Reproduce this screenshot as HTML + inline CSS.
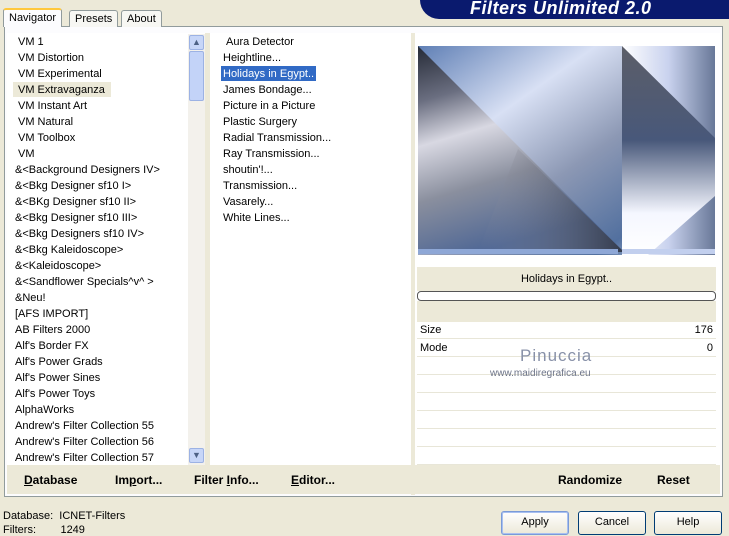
<!DOCTYPE html><html><head><style>
*{margin:0;padding:0;box-sizing:border-box}
body{width:729px;height:528px;background:#ece9d8;font-family:"Liberation Sans",sans-serif;font-size:11px;color:#000;position:relative;overflow:hidden}
.a{position:absolute}
.it{position:absolute;white-space:nowrap;line-height:14px}
.tab{position:absolute;border:1px solid #919b9c;border-bottom:none;background:#f7f7f3;padding:0 5px;font-size:11px;line-height:16px;border-radius:3px 3px 0 0}
.btn{position:absolute;border:1px solid #003c74;border-radius:3px;background:linear-gradient(#fff,#ece9d8);text-align:center;line-height:20px;font-size:11px}
.row{position:absolute;left:417px;width:299px;height:17px;background:#fff;border-bottom:1px solid #e8e6d8}
.bb{position:absolute;font-weight:bold;font-size:12px;top:473px}
</style></head><body>
<div class="a" style="left:420px;top:0;width:309px;height:19px;background:#0a1a6e;border-radius:0 0 0 22px"></div>
<div class="a" style="left:470px;top:-2px;color:#fff;font-weight:bold;font-style:italic;font-size:18px;letter-spacing:0.5px">Filters Unlimited 2.0</div>
<div class="a" style="left:4px;top:26px;width:719px;height:471px;border:1px solid #919b9c;background:#fcfcfe"></div>
<div class="tab" style="left:3px;top:8px;height:19px;background:#fcfcfe;border-top:2px solid #ffc83c;z-index:2">Navigator</div>
<div class="tab" style="left:69px;top:10px;height:17px">Presets</div>
<div class="tab" style="left:121px;top:10px;height:17px">About</div>
<div class="a" style="left:7px;top:33px;width:198px;height:432px;background:#fff"></div>
<div class="a" style="left:188px;top:34px;width:17px;height:431px;background:#f3f1ec"></div>
<div class="a" style="left:189px;top:35px;width:15px;height:15px;background:#c7d6f8;border:1px solid #9cb2e4;border-radius:2px;font-size:9px;text-align:center;color:#4d6185;line-height:12px">▲</div>
<div class="a" style="left:189px;top:51px;width:15px;height:50px;background:#c3d3f8;border:1px solid #9cb2e4;border-radius:2px"></div>
<div class="a" style="left:189px;top:448px;width:15px;height:15px;background:#c7d6f8;border:1px solid #9cb2e4;border-radius:2px;font-size:9px;text-align:center;color:#4d6185;line-height:12px">▼</div>
<div class="a" style="left:205px;top:33px;width:5px;height:432px;background:#ece9d8"></div>
<div class="a" style="left:210px;top:33px;width:201px;height:432px;background:#fff"></div>
<div class="a" style="left:411px;top:33px;width:4px;height:462px;background:#ece9d8"></div>
<div class="a" style="left:415px;top:33px;width:305px;height:432px;background:#fff"></div>
<div class="a" style="left:13px;top:82px;width:98px;height:15px;background:#ece9d8"></div>
<div class="a" style="left:221px;top:66px;width:95px;height:15px;background:#316ac5"></div>
<div style="position:absolute;left:18px;top:35px">
<div class="it" style="top:0">VM 1</div><div class="it" style="top:16px">VM Distortion</div><div class="it" style="top:32px">VM Experimental</div><div class="it" style="top:48px">VM Extravaganza</div><div class="it" style="top:64px">VM Instant Art</div><div class="it" style="top:80px">VM Natural</div><div class="it" style="top:96px">VM Toolbox</div><div class="it" style="top:112px">VM</div>
</div>
<div style="position:absolute;left:15px;top:163px">
<div class="it" style="top:0">&amp;&lt;Background Designers IV&gt;</div><div class="it" style="top:16px">&amp;&lt;Bkg Designer sf10 I&gt;</div><div class="it" style="top:32px">&amp;&lt;BKg Designer sf10 II&gt;</div><div class="it" style="top:48px">&amp;&lt;Bkg Designer sf10 III&gt;</div><div class="it" style="top:64px">&amp;&lt;Bkg Designers sf10 IV&gt;</div><div class="it" style="top:80px">&amp;&lt;Bkg Kaleidoscope&gt;</div><div class="it" style="top:96px">&amp;&lt;Kaleidoscope&gt;</div><div class="it" style="top:112px">&amp;&lt;Sandflower Specials^v^ &gt;</div><div class="it" style="top:128px">&amp;Neu!</div><div class="it" style="top:144px">[AFS IMPORT]</div><div class="it" style="top:160px">AB Filters 2000</div><div class="it" style="top:176px">Alf's Border FX</div><div class="it" style="top:192px">Alf's Power Grads</div><div class="it" style="top:208px">Alf's Power Sines</div><div class="it" style="top:224px">Alf's Power Toys</div><div class="it" style="top:240px">AlphaWorks</div><div class="it" style="top:256px">Andrew's Filter Collection 55</div><div class="it" style="top:272px">Andrew's Filter Collection 56</div><div class="it" style="top:288px">Andrew's Filter Collection 57</div>
</div>
<div style="position:absolute;left:223px;top:35px">
<div class="it" style="top:0;left:3px">Aura Detector</div><div class="it" style="top:16px">Heightline...</div><div class="it" style="top:32px;color:#fff">Holidays in Egypt..</div><div class="it" style="top:48px">James Bondage...</div><div class="it" style="top:64px">Picture in a Picture</div><div class="it" style="top:80px">Plastic Surgery</div><div class="it" style="top:96px">Radial Transmission...</div><div class="it" style="top:112px">Ray Transmission...</div><div class="it" style="top:128px">shoutin'!...</div><div class="it" style="top:144px">Transmission...</div><div class="it" style="top:160px">Vasarely...</div><div class="it" style="top:176px">White Lines...</div>
</div>
<svg class="a" style="left:418px;top:46px" width="297" height="209">
<defs>
<linearGradient id="u" x1="0" y1="0" x2="1" y2="1"><stop offset="0" stop-color="#5f7fb5"/><stop offset=".3" stop-color="#d8e0f4"/><stop offset=".55" stop-color="#8c98b4"/><stop offset=".8" stop-color="#52709f"/><stop offset="1" stop-color="#f4f7ff"/></linearGradient>
<linearGradient id="l" x1="0" y1="0" x2="0.3" y2="1"><stop offset="0" stop-color="#252a36"/><stop offset=".25" stop-color="#6a6e80"/><stop offset=".45" stop-color="#d8d8e2"/><stop offset=".7" stop-color="#8a8f9e"/><stop offset="1" stop-color="#4f6795"/></linearGradient>
<linearGradient id="ld" x1="0" y1="0" x2="1" y2="0"><stop offset="0" stop-color="#9a9aa6" stop-opacity="0"/><stop offset="1" stop-color="#2c2f38"/></linearGradient>
<linearGradient id="r" x1="0" y1="0" x2="1" y2="0"><stop offset="0" stop-color="#fff"/><stop offset=".5" stop-color="#c9d2ee"/><stop offset="1" stop-color="#687898"/></linearGradient>
<linearGradient id="rd" x1="0" y1="0" x2="0" y2="1"><stop offset="0" stop-color="#5c5e68"/><stop offset=".45" stop-color="#48587a"/><stop offset=".8" stop-color="#f5f7ff"/><stop offset="1" stop-color="#fff"/></linearGradient>
</defs>
<rect width="297" height="209" fill="url(#u)"/>
<polygon points="0,0 0,206 206,206" fill="url(#l)"/>
<polygon points="100,103 206,206 60,206" fill="url(#ld)" opacity=".8"/>
<rect x="204" y="0" width="93" height="209" fill="url(#r)"/>
<polygon points="204,0 297,92 297,150 230,209 204,209" fill="url(#rd)"/>
<rect x="0" y="203" width="200" height="5" fill="#8ea7d6"/>
<rect x="204" y="203" width="93" height="5" fill="#c2cfee"/>
</svg>
<div class="a" style="left:417px;top:267px;width:299px;height:24px;background:#ece9d8;text-align:center;line-height:24px">Holidays in Egypt..</div>
<div class="a" style="left:417px;top:291px;width:299px;height:10px;background:#fff;border:1px solid #555;border-radius:4px"></div>
<div class="a" style="left:417px;top:301px;width:299px;height:22px;background:#ece9d8"></div>
<div class="row" style="top:322px"><span class="a" style="left:3px;top:2px">Size</span><span class="a" style="right:3px;top:2px">176</span></div>
<div class="row" style="top:340px"><span class="a" style="left:3px;top:2px">Mode</span><span class="a" style="right:3px;top:2px">0</span></div>
<div class="row" style="top:358px"></div><div class="row" style="top:376px"></div><div class="row" style="top:394px"></div><div class="row" style="top:412px"></div><div class="row" style="top:430px"></div><div class="row" style="top:448px"></div>
<div class="a" style="left:520px;top:346px;color:#8891a8;font-size:17px;letter-spacing:1px">Pinuccia</div>
<div class="a" style="left:490px;top:368px;color:#6d7488;font-size:10px">www.maidiregrafica.eu</div>
<div class="a" style="left:7px;top:465px;width:404px;height:29px;background:#ece9d8"></div>
<div class="a" style="left:415px;top:465px;width:305px;height:29px;background:#ece9d8"></div>
<div class="bb" style="left:24px"><u>D</u>atabase</div>
<div class="bb" style="left:115px">Im<u>p</u>ort...</div>
<div class="bb" style="left:194px">Filter <u>I</u>nfo...</div>
<div class="bb" style="left:291px"><u>E</u>ditor...</div>
<div class="bb" style="left:558px">Randomize</div>
<div class="bb" style="left:657px">Reset</div>
<div class="a" style="left:3px;top:510px">Database:&nbsp; ICNET-Filters</div>
<div class="a" style="left:3px;top:524px">Filters:&nbsp;&nbsp;&nbsp;&nbsp;&nbsp;&nbsp;&nbsp; 1249</div>
<div class="btn" style="left:501px;top:511px;width:68px;height:24px;border-color:#7a9ad8;box-shadow:inset 0 0 0 1px #a8c0f0">Apply</div>
<div class="btn" style="left:578px;top:511px;width:68px;height:24px">Cancel</div>
<div class="btn" style="left:654px;top:511px;width:68px;height:24px">Help</div>
</body></html>
